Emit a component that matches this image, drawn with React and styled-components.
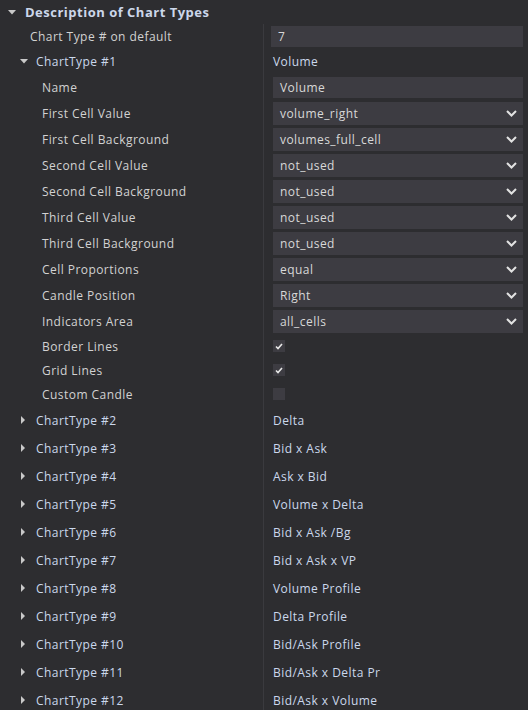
import React from "react";
import styled, { createGlobalStyle } from "styled-components";

const Global = createGlobalStyle`
  html, body { margin: 0; padding: 0; background: #2d2d30; }
  body { font-family: "Open Sans", "Noto Sans", sans-serif; }
`;

const Panel = styled.div`
  width: 528px;
  height: 710px;
  overflow: hidden;
  background: #2d2d30;
  color: #d2d2d2;
  font-size: 12px;
  letter-spacing: 0.45px;
`;

const Header = styled.div`
  height: 24px;
  display: flex;
  align-items: center;
  gap: 9px;
  padding-left: 8px;
  font-weight: 700;
  font-size: 13px;
  letter-spacing: 0.5px;
  color: #ccd7ea;
`;

const Row = styled.div`
  display: grid;
  grid-template-columns: 264px 1fr;
  height: ${(p) => p.$h}px;
`;

const LabelCell = styled.div`
  display: flex;
  align-items: center;
  padding-left: ${(p) => p.$indent}px;
  border-right: 1px solid #3a3a3e;
  color: ${(p) => (p.$group ? "#cbd8ec" : "#d2d2d2")};
  gap: ${(p) => p.$gap ?? 0}px;
`;

const ValueCell = styled.div`
  display: flex;
  align-items: center;
  padding-left: ${(p) => p.$pad ?? 9}px;
  padding-right: 5px;
  color: #cbd8ec;
`;

const Box = styled.div`
  flex: 1;
  height: ${(p) => p.$h}px;
  display: flex;
  align-items: center;
  justify-content: space-between;
  background: #3d3c42;
  color: #d8d8d8;
  padding: 0 6px 0 7px;
  box-sizing: border-box;
`;

const Check = styled.div`
  width: 12px;
  height: 12px;
  background: #3d3c42;
  display: flex;
  align-items: center;
  justify-content: center;
`;

const Tri = ({ open }) =>
  open ? (
    <svg width="8" height="5" viewBox="0 0 8 5">
      <path d="M0 0H8L4 4.5Z" fill="#c9c9c9" />
    </svg>
  ) : (
    <svg width="4" height="8" viewBox="0 0 4 8">
      <path d="M0 0L4 4L0 8Z" fill="#c9c9c9" />
    </svg>
  );

const Chevron = () => (
  <svg width="11" height="7" viewBox="0 0 11 7">
    <path d="M1 1L5.5 5.5L10 1" stroke="#e2e2e2" strokeWidth="2" fill="none" />
  </svg>
);

const Tick = () => (
  <svg width="8" height="7" viewBox="0 0 8 7">
    <path d="M1 3.5L3 5.5L7 1" stroke="#e8e8e8" strokeWidth="1.6" fill="none" />
  </svg>
);

const selects = [
  ["First Cell Value", "volume_right"],
  ["First Cell Background", "volumes_full_cell"],
  ["Second Cell Value", "not_used"],
  ["Second Cell Background", "not_used"],
  ["Third Cell Value", "not_used"],
  ["Third Cell Background", "not_used"],
  ["Cell Proportions", "equal"],
  ["Candle Position", "Right"],
  ["Indicators Area", "all_cells"],
];

const checks = [
  ["Border Lines", true],
  ["Grid Lines", true],
  ["Custom Candle", false],
];

const types = [
  "Delta",
  "Bid x Ask",
  "Ask x Bid",
  "Volume x Delta",
  "Bid x Ask /Bg",
  "Bid x Ask x VP",
  "Volume Profile",
  "Delta Profile",
  "Bid/Ask Profile",
  "Bid/Ask x Delta Pr",
  "Bid/Ask x Volume",
];

export default function App() {
  return (
    <Panel>
      <Global />
      <Header>
        <Tri open />
        <span>Description of Chart Types</span>
      </Header>
      <Row $h={24}>
        <LabelCell $indent={30}>Chart Type # on default</LabelCell>
        <ValueCell $pad={7}>
          <Box $h={21}>7</Box>
        </ValueCell>
      </Row>
      <Row $h={26}>
        <LabelCell $indent={20} $gap={8} $group>
          <Tri open />
          <span>ChartType #1</span>
        </LabelCell>
        <ValueCell>Volume</ValueCell>
      </Row>
      <Row $h={26}>
        <LabelCell $indent={42}>Name</LabelCell>
        <ValueCell>
          <Box $h={21}>Volume</Box>
        </ValueCell>
      </Row>
      {selects.map(([l, v]) => (
        <Row $h={26} key={l}>
          <LabelCell $indent={42}>{l}</LabelCell>
          <ValueCell>
            <Box $h={23}>
              <span>{v}</span>
              <Chevron />
            </Box>
          </ValueCell>
        </Row>
      ))}
      {checks.map(([l, c]) => (
        <Row $h={24} key={l}>
          <LabelCell $indent={42}>{l}</LabelCell>
          <ValueCell>
            <Check>{c && <Tick />}</Check>
          </ValueCell>
        </Row>
      ))}
      {types.map((t, i) => (
        <Row $h={28} key={t}>
          <LabelCell $indent={21} $gap={11} $group>
            <Tri />
            <span>ChartType #{i + 2}</span>
          </LabelCell>
          <ValueCell>{t}</ValueCell>
        </Row>
      ))}
    </Panel>
  );
}
